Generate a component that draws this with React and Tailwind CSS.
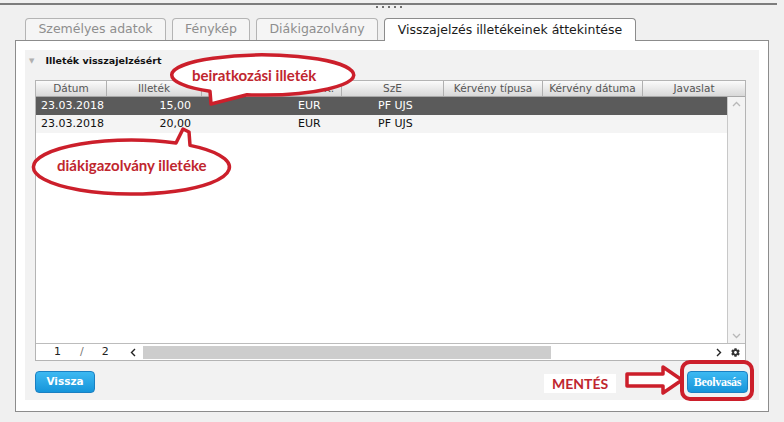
import { FaCog } from 'react-icons/fa';

const ROWS = [
    { datum: '23.03.2018', illetek: '15,00', penz: 'EUR', sze: 'PF UJS', selected: true },
    { datum: '23.03.2018', illetek: '20,00', penz: 'EUR', sze: 'PF UJS', selected: false },
];

const HEADERS = [
    { label: 'Dátum', cls: 'justify-center' },
    { label: 'Illeték', cls: 'justify-center' },
    { label: 'K.', cls: 'justify-end pr-[7px]' },
    { label: 'SzE', cls: 'justify-center' },
    { label: 'Kérvény típusa', cls: 'justify-center' },
    { label: 'Kérvény dátuma', cls: 'justify-center' },
    { label: 'Javaslat', cls: 'justify-center' },
];

function Tab({ label, width, active }) {
    return (
        <div className={`${width} h-[22px] flex items-center justify-center rounded-t-[4px] border border-b-0 text-[12.5px] ${active
            ? 'bg-white border-[#8c8c8c] text-[#1a1a1a] relative z-10 h-[23px] -mb-px'
            : 'bg-[#f5f5f5] border-[#b4b4b4] text-[#8e8e8e]'}`}>
            {label}
        </div>
    );
}

function Btn({ children, className = '' }) {
    return (
        <button className={`h-[22px] rounded-[4px] border border-[#1b80c2] bg-linear-to-b from-[#3cb9f2] to-[#1595da] text-white font-bold flex items-center justify-center ${className}`}>
            {children}
        </button>
    );
}

export default function App() {
    return (
        <div className="relative w-[784px] h-[422px] overflow-hidden bg-[#f0f0f0] font-['DejaVu_Sans',sans-serif] flex flex-col">
            {/* splitter */}
            <div className="h-[3px]" />
            <div className="h-[2px] w-[777px] bg-[#7d7d7d]" />
            <div className="flex gap-[4px] ml-[376px] mt-px">
                {[0, 1, 2, 3, 4].map(i => <div key={i} className="w-[2px] h-[2px] bg-[#707070]" />)}
            </div>

            {/* tabs */}
            <div className="flex items-end gap-[5px] pl-[25px] mt-[10px]">
                <Tab label="Személyes adatok" width="w-[141px]" />
                <Tab label="Fénykép" width="w-[78px] ml-px" />
                <Tab label="Diákigazolvány" width="w-[122px] ml-px" />
                <Tab label="Visszajelzés illetékeinek áttekintése" width="w-[252px] ml-px" active />
            </div>

            {/* panel */}
            <div className="ml-[15px] w-[754px] h-[372px] border border-[#8c8c8c] bg-white px-[9px] pt-[9px] pb-[11px]">
                <div className="h-full bg-[#f2f2f2] flex flex-col px-[10px]">
                    <div className="flex items-center h-[16px] mt-[3px] -ml-[6px]">
                        <span className="text-[7px] text-[#b0b0b0]">▼</span>
                        <span className="ml-[11px] text-[9.5px] font-bold text-[#111]">Illeték visszajelzésért</span>
                    </div>

                    {/* table */}
                    <div className="mt-[11px] w-[711px] border border-[#b4b4b4] bg-white flex flex-col">
                        <div className="h-[16px] grid grid-cols-[71px_95px_140px_102px_99px_100px_102px] bg-linear-to-b from-[#fbfbfb] to-[#d8d8d8] border-b border-[#a8a8a8]">
                            {HEADERS.map((h, i) => (
                                <div key={i} className={`flex items-center text-[10.5px] text-[#555] overflow-hidden whitespace-nowrap ${h.cls} ${i < 6 ? 'border-r border-[#b0b0b0]' : ''}`}>
                                    {h.label}
                                </div>
                            ))}
                        </div>
                        <div className="h-[246px] flex">
                            <div className="w-[691px] flex flex-col">
                                {ROWS.map((r, i) => (
                                    <div key={i} className={`h-[18px] grid grid-cols-[71px_95px_140px_102px_99px_100px_84px] items-center text-[11px] ${r.selected ? 'bg-[#5b5b5b] text-white' : 'bg-[#f4f4f4] text-[#111]'}`}>
                                        <span className="pl-[5px]">{r.datum}</span>
                                        <span className="text-right pr-[11px]">{r.illetek}</span>
                                        <span className="pl-[96px]">{r.penz}</span>
                                        <span className="pl-[36px]">{r.sze}</span>
                                        <span />
                                        <span />
                                        <span />
                                    </div>
                                ))}
                            </div>
                            <div className="w-[18px] border-l border-[#c8c8c8] bg-[#f3f3f3] flex flex-col items-center justify-between py-[4px] text-[#b8b8b8]">
                                <svg width="9" height="6" viewBox="0 0 9 6"><path d="M1 5 L4.5 1.5 L8 5" fill="none" stroke="currentColor" strokeWidth="1.3" /></svg>
                                <svg width="9" height="6" viewBox="0 0 9 6"><path d="M1 1 L4.5 4.5 L8 1" fill="none" stroke="currentColor" strokeWidth="1.3" /></svg>
                            </div>
                        </div>
                        <div className="h-[17px] border-t border-[#bcbcbc] bg-white flex items-center text-[11px] text-[#222]">
                            <span className="ml-[18px]">1</span>
                            <span className="ml-[19px] text-[#777]">/</span>
                            <span className="ml-[18px]">2</span>
                            <svg className="ml-[21px]" width="6" height="9" viewBox="0 0 6 9"><path d="M5 1 L1.5 4.5 L5 8" fill="none" stroke="#222" strokeWidth="1.4" /></svg>
                            <div className="ml-[7px] w-[408px] h-[13px] bg-[#cdcdcd]" />
                            <div className="flex-1" />
                            <svg width="6" height="9" viewBox="0 0 6 9"><path d="M1 1 L4.5 4.5 L1 8" fill="none" stroke="#222" strokeWidth="1.4" /></svg>
                            <FaCog className="ml-[9px] mr-[5px] text-[#333]" size={9} />
                        </div>
                    </div>

                    {/* buttons */}
                    <div className="mt-[10px] w-[713px] flex items-center justify-between">
                        <Btn className="w-[60px] text-[10.5px]">Vissza</Btn>
                        <Btn className="w-[61px] text-[12px] font-['Liberation_Serif',serif] tracking-[-0.3px]">Beolvasás</Btn>
                    </div>
                </div>
            </div>

            {/* annotations */}
            <svg className="absolute left-0 top-0 pointer-events-none" width="784" height="422">
                <path d="M 247 94.7 A 91 20 0 1 0 210 91.3 L 211 104 Z" fill="white" stroke="#cc1f2b" strokeWidth="3.5" strokeLinejoin="round" />
                <path d="M 190 145.4 A 98 27 0 1 1 176 143 L 183 129 L 189 132 Z" fill="white" stroke="#cc1f2b" strokeWidth="3.5" strokeLinejoin="round" />
                <path d="M 627 374 H 663 V 367 L 682 380 L 663 393 V 386 H 627 Z" fill="white" stroke="#cc1f2b" strokeWidth="3.5" strokeLinejoin="round" />
                <rect x="682" y="362" width="70" height="37" rx="8" fill="none" stroke="#cc1f2b" strokeWidth="4" />
            </svg>
            <span className="absolute left-[192px] top-[68px] text-[15px] font-bold text-[#c0262e] font-['Lato',sans-serif] leading-none">beiratkozási illeték</span>
            <span className="absolute left-[57px] top-[158px] text-[15px] font-bold text-[#c0262e] font-['Lato',sans-serif] leading-none">diákigazolvány illetéke</span>
            <span className="absolute left-[544px] top-[374px] px-[8px] py-[2px] bg-white text-[14px] font-bold text-[#c0262e] font-['Lato',sans-serif] leading-[15px]">MENTÉS</span>
        </div>
    );
}
